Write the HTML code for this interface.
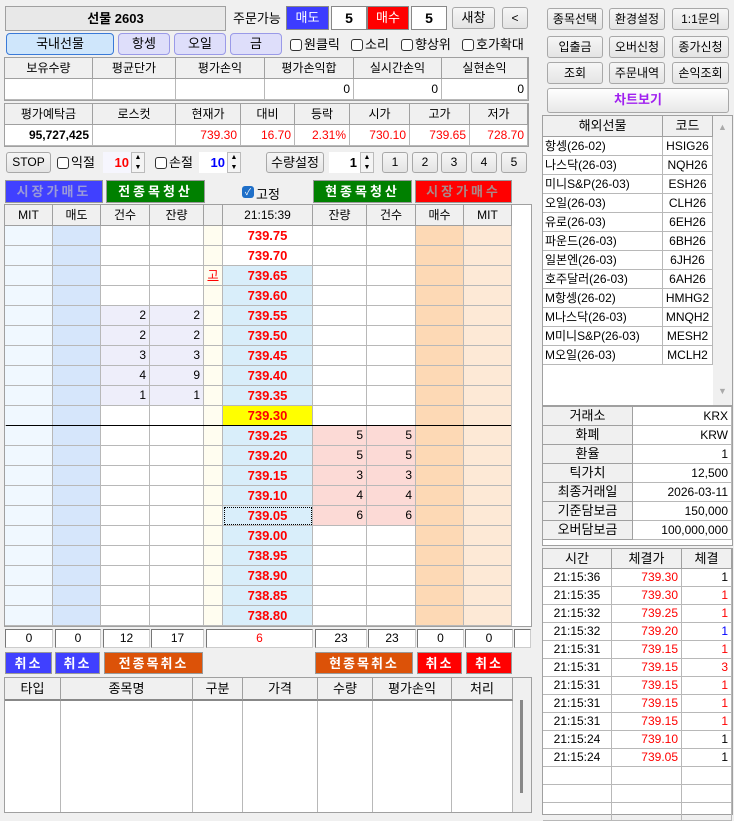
<!DOCTYPE html>
<html><head><meta charset="utf-8">
<style>
*{box-sizing:border-box;margin:0;padding:0}
body{width:734px;height:816px;background:#f0f0f0;font-family:"Liberation Sans","Noto Sans CJK KR","NanumGothic",sans-serif;font-size:12px;color:#000;position:relative;overflow:hidden}
.a{position:absolute}
.btn{position:absolute;border:1px solid #a8a8a8;border-radius:3px;background:linear-gradient(#f6f6f6,#e4e4e4);text-align:center;font-size:12px}
.tab{position:absolute;border:1px solid #9a9ae8;border-radius:4px;background:#dedefa;text-align:center;font-size:13px;line-height:20px}
.cb{position:absolute;font-size:13px;line-height:16px;white-space:nowrap}
.cb i{display:inline-block;width:12px;height:12px;border:1px solid #333;border-radius:3px;background:#fff;vertical-align:-2px;margin-right:2px}
.box{position:absolute;border:1px solid #a0a0a0;background:#fff}
.c{position:absolute;border-right:1px solid #b8b8b8;border-bottom:1px solid #b8b8b8;text-align:center;white-space:nowrap;overflow:hidden}
.h{background:#f0f0f0;border-right:1px solid #a0a0a0;border-bottom:1px solid #a0a0a0}
.r{text-align:right;padding-right:3px}
.cl{font-weight:bold;color:#fff;text-align:center;font-size:13px;line-height:22px;letter-spacing:3px;position:absolute;border:1px solid #999}
.p{color:#f00;font-weight:bold;font-size:13px}
.red{color:#f00}.blue{color:#00f}
</style></head><body>

<!-- top row -->
<div class="a" style="left:5px;top:6px;width:221px;height:25px;border:1px solid #a0a0a0;background:#e8e8e8;text-align:center;font-weight:bold;font-size:13px;line-height:23px">선물 2603</div>
<div class="a" style="left:233px;top:8px;font-size:13px">주문가능</div>
<div class="a" style="left:286px;top:6px;width:43px;height:24px;background:#3c3cff;border:1px solid #888;color:#fff;text-align:center;line-height:22px;font-size:13px">매도</div>
<div class="a" style="left:331px;top:6px;width:36px;height:24px;background:#fff;border:1px solid #888;text-align:center;line-height:22px;font-weight:bold;font-size:14px">5</div>
<div class="a" style="left:367px;top:6px;width:42px;height:24px;background:#f00;border:1px solid #888;color:#fff;text-align:center;line-height:22px;font-size:13px">매수</div>
<div class="a" style="left:411px;top:6px;width:36px;height:24px;background:#fff;border:1px solid #888;text-align:center;line-height:22px;font-weight:bold;font-size:14px">5</div>
<div class="btn" style="left:452px;top:7px;width:43px;height:22px;line-height:20px;font-size:13px">새창</div>
<div class="btn" style="left:502px;top:7px;width:26px;height:22px;line-height:20px">&lt;</div>

<!-- tabs -->
<div class="tab" style="left:6px;top:33px;width:108px;height:22px;background:#cfe6fb;border-color:#3a7ad8">국내선물</div>
<div class="tab" style="left:118px;top:33px;width:52px;height:22px">항셍</div>
<div class="tab" style="left:174px;top:33px;width:52px;height:22px">오일</div>
<div class="tab" style="left:230px;top:33px;width:52px;height:22px">금</div>
<div class="cb" style="left:290px;top:37px"><i></i>원클릭</div>
<div class="cb" style="left:351px;top:37px"><i></i>소리</div>
<div class="cb" style="left:401px;top:37px"><i></i>향상위</div>
<div class="cb" style="left:462px;top:37px"><i></i>호가확대</div>

<!-- table 1 -->
<div class="box" style="left:4px;top:57px;width:525px;height:44px"></div>
<div class="c h" style="left:5px;top:58px;width:88px;height:21px;line-height:20px">보유수량</div>
<div class="c h" style="left:93px;top:58px;width:83px;height:21px;line-height:20px">평균단가</div>
<div class="c h" style="left:176px;top:58px;width:89px;height:21px;line-height:20px">평가손익</div>
<div class="c h" style="left:265px;top:58px;width:89px;height:21px;line-height:20px">평가손익합</div>
<div class="c h" style="left:354px;top:58px;width:88px;height:21px;line-height:20px">실시간손익</div>
<div class="c h" style="left:442px;top:58px;width:86px;height:21px;line-height:20px">실현손익</div>
<div class="c" style="left:5px;top:79px;width:88px;height:21px"></div>
<div class="c" style="left:93px;top:79px;width:83px;height:21px"></div>
<div class="c" style="left:176px;top:79px;width:89px;height:21px"></div>
<div class="c r" style="left:265px;top:79px;width:89px;height:21px;line-height:20px">0</div>
<div class="c r" style="left:354px;top:79px;width:88px;height:21px;line-height:20px">0</div>
<div class="c r" style="left:442px;top:79px;width:86px;height:21px;line-height:20px">0</div>

<!-- table 2 -->
<div class="box" style="left:4px;top:103px;width:525px;height:44px"></div>
<div class="c h" style="left:5px;top:104px;width:88px;height:21px;line-height:20px">평가예탁금</div>
<div class="c h" style="left:93px;top:104px;width:83px;height:21px;line-height:20px">로스컷</div>
<div class="c h" style="left:176px;top:104px;width:65px;height:21px;line-height:20px">현재가</div>
<div class="c h" style="left:241px;top:104px;width:54px;height:21px;line-height:20px">대비</div>
<div class="c h" style="left:295px;top:104px;width:55px;height:21px;line-height:20px">등락</div>
<div class="c h" style="left:350px;top:104px;width:60px;height:21px;line-height:20px">시가</div>
<div class="c h" style="left:410px;top:104px;width:60px;height:21px;line-height:20px">고가</div>
<div class="c h" style="left:470px;top:104px;width:58px;height:21px;line-height:20px">저가</div>
<div class="c r" style="left:5px;top:125px;width:88px;height:21px;line-height:20px;font-weight:bold">95,727,425</div>
<div class="c" style="left:93px;top:125px;width:83px;height:21px"></div>
<div class="c r red" style="left:176px;top:125px;width:65px;height:21px;line-height:20px">739.30</div>
<div class="c r red" style="left:241px;top:125px;width:54px;height:21px;line-height:20px">16.70</div>
<div class="c r red" style="left:295px;top:125px;width:55px;height:21px;line-height:20px">2.31%</div>
<div class="c r red" style="left:350px;top:125px;width:60px;height:21px;line-height:20px">730.10</div>
<div class="c r red" style="left:410px;top:125px;width:60px;height:21px;line-height:20px">739.65</div>
<div class="c r red" style="left:470px;top:125px;width:58px;height:21px;line-height:20px">728.70</div>

<!-- STOP row -->
<div class="btn" style="left:6px;top:152px;width:45px;height:21px;line-height:19px">STOP</div>
<div class="cb" style="left:57px;top:155px"><i></i>익절</div>
<div class="a" style="left:103px;top:152px;width:28px;height:21px;background:#f6f6fe;color:#f00;font-weight:bold;font-size:13px;text-align:right;padding-right:2px;line-height:21px">10</div>
<div class="a" style="left:131px;top:152px;width:14px;height:21px;font-size:7px;line-height:10px;text-align:center;border:1px solid #bbb;background:#f4f4f4">▲<br>▼</div>
<div class="cb" style="left:155px;top:155px"><i></i>손절</div>
<div class="a" style="left:199px;top:152px;width:28px;height:21px;background:#fff;color:#00f;font-weight:bold;font-size:13px;text-align:right;padding-right:2px;line-height:21px">10</div>
<div class="a" style="left:227px;top:152px;width:14px;height:21px;font-size:7px;line-height:10px;text-align:center;border:1px solid #bbb;background:#f4f4f4">▲<br>▼</div>
<div class="btn" style="left:266px;top:152px;width:58px;height:21px;line-height:19px;font-size:13px">수량설정</div>
<div class="a" style="left:329px;top:152px;width:31px;height:21px;background:#fff;font-weight:bold;font-size:13px;text-align:right;padding-right:3px;line-height:21px">1</div>
<div class="a" style="left:360px;top:152px;width:14px;height:21px;font-size:7px;line-height:10px;text-align:center;border:1px solid #bbb;background:#f4f4f4">▲<br>▼</div>
<div class="btn" style="left:382px;top:152px;width:26px;height:21px;line-height:19px">1</div>
<div class="btn" style="left:412px;top:152px;width:26px;height:21px;line-height:19px">2</div>
<div class="btn" style="left:441px;top:152px;width:26px;height:21px;line-height:19px">3</div>
<div class="btn" style="left:471px;top:152px;width:26px;height:21px;line-height:19px">4</div>
<div class="btn" style="left:501px;top:152px;width:26px;height:21px;line-height:19px">5</div>

<!-- action row -->
<div class="cl" style="left:5px;top:180px;width:98px;height:23px;background:#4040ff;color:#9a9ad8">시장가매도</div>
<div class="cl" style="left:106px;top:180px;width:99px;height:23px;background:#008000">전종목청산</div>
<div class="a" style="left:242px;top:186px;width:12px;height:12px;background:#1f6fc8;border-radius:3px;color:#fff;font-size:9px;line-height:12px;text-align:center">✓</div>
<div class="a" style="left:256px;top:184px;font-size:13px">고정</div>
<div class="cl" style="left:313px;top:180px;width:99px;height:23px;background:#008000">현종목청산</div>
<div class="cl" style="left:415px;top:180px;width:97px;height:23px;background:#ff0000;color:#a88">시장가매수</div>

<!-- order book -->
<div class="box" style="left:4px;top:204px;width:528px;height:423px;border-color:#a0a0a0"></div>
<div id="ob"></div>

<!-- totals -->
<div id="tot"></div>

<!-- cancel row -->
<div class="cl" style="left:5px;top:652px;width:47px;height:22px;background:#4040ff;letter-spacing:2px">취소</div>
<div class="cl" style="left:55px;top:652px;width:45px;height:22px;background:#4040ff;letter-spacing:2px">취소</div>
<div class="cl" style="left:104px;top:652px;width:99px;height:22px;background:#dc5208;letter-spacing:2px">전종목취소</div>
<div class="cl" style="left:315px;top:652px;width:98px;height:22px;background:#dc5208;letter-spacing:2px">현종목취소</div>
<div class="cl" style="left:417px;top:652px;width:45px;height:22px;background:#f00;letter-spacing:2px">취소</div>
<div class="cl" style="left:466px;top:652px;width:46px;height:22px;background:#f00;letter-spacing:2px">취소</div>

<!-- bottom table -->
<div class="box" style="left:4px;top:677px;width:528px;height:136px"></div>
<div id="bt"></div>
<div class="a" style="left:513px;top:678px;width:18px;height:134px;background:#f0f0f0"></div>
<div class="a" style="left:520px;top:700px;width:3px;height:93px;background:#888"></div>

<!-- right panel buttons -->
<div class="btn" style="left:547px;top:8px;width:56px;height:22px;line-height:20px">종목선택</div>
<div class="btn" style="left:609px;top:8px;width:56px;height:22px;line-height:20px">환경설정</div>
<div class="btn" style="left:672px;top:8px;width:57px;height:22px;line-height:20px">1:1문의</div>
<div class="btn" style="left:547px;top:36px;width:56px;height:22px;line-height:20px">입출금</div>
<div class="btn" style="left:609px;top:36px;width:56px;height:22px;line-height:20px">오버신청</div>
<div class="btn" style="left:672px;top:36px;width:57px;height:22px;line-height:20px">종가신청</div>
<div class="btn" style="left:547px;top:62px;width:56px;height:22px;line-height:20px">조회</div>
<div class="btn" style="left:609px;top:62px;width:56px;height:22px;line-height:20px">주문내역</div>
<div class="btn" style="left:672px;top:62px;width:57px;height:22px;line-height:20px">손익조회</div>
<div class="btn" style="left:547px;top:88px;width:182px;height:25px;line-height:22px;color:#a020f0;font-weight:bold;font-size:13px;background:linear-gradient(#fff,#e8e8e8)">차트보기</div>

<!-- right list -->
<div class="box" style="left:542px;top:115px;width:191px;height:291px"></div>
<div class="a" style="left:713px;top:116px;width:19px;height:289px;background:#f0f0f0;color:#aaa;font-size:9px;text-align:center"><div style="margin-top:6px">▲</div><div style="margin-top:254px">▼</div></div>
<div id="rl"></div>

<!-- info -->
<div class="box" style="left:542px;top:406px;width:191px;height:140px"></div>
<div id="inf"></div>

<!-- trades -->
<div class="box" style="left:542px;top:548px;width:191px;height:267px"></div>
<div id="tr"></div>

<script>
function d(p,html){document.getElementById(p).insertAdjacentHTML('beforeend',html)}
function cell(p,x,y,w,h,txt,cls,st){d(p,'<div class="c '+(cls||'')+'" style="left:'+x+'px;top:'+y+'px;width:'+w+'px;height:'+h+'px;line-height:'+(h-1)+'px;'+(st||'')+'">'+txt+'</div>')}
// order book
var cols=[5,53,101,150,204,223,313,367,416,464,512];
var hd=['MIT','매도','건수','잔량','','21:15:39','잔량','건수','매수','MIT'];
for(var i=0;i<10;i++)cell('ob',cols[i],205,cols[i+1]-cols[i],21,hd[i],'h');
var prices=['739.75','739.70','739.65','739.60','739.55','739.50','739.45','739.40','739.35','739.30','739.25','739.20','739.15','739.10','739.05','739.00','738.95','738.90','738.85','738.80'];
var sell={4:[2,2],5:[2,2],6:[3,3],7:[4,9],8:[1,1]};
var buy={10:[5,5],11:[5,5],12:[3,3],13:[4,4],14:[6,6]};
for(var r=0;r<20;r++){
 var y=226+r*20;
 cell('ob',5,y,48,20,'','', 'background:#f0f8ff');
 cell('ob',53,y,48,20,'','', 'background:#d6e6fb');
 var s=sell[r];
 cell('ob',101,y,49,20,s?s[0]:'','r',s?'background:#eeeefa':'');
 cell('ob',150,y,54,20,s?s[1]:'','r',s?'background:#eeeefa':'');
 cell('ob',204,y,19,20,r==2?'<span style="color:#f00;text-decoration:underline">고</span>':'','', 'background:#fffdf0');
 var bg=r<2?'#fff':(r==9?'#ffff00':'#d9eefa');
 var extra=r==14?'outline:1px dotted #000;outline-offset:-2px;':'';
 cell('ob',223,y,90,20,prices[r],'p','background:'+bg+';'+extra);
 var b=buy[r];
 cell('ob',313,y,54,20,b?b[0]:'','r',b?'background:#fcdad6':'');
 cell('ob',367,y,49,20,b?b[1]:'','r',b?'background:#fcdad6':'');
 cell('ob',416,y,48,20,'','', 'background:#fdd9b5');
 cell('ob',464,y,48,20,'','', 'background:#fde9d6');
}
d('ob','<div class="a" style="left:6px;top:425px;width:505px;height:1px;background:#000"></div>');
// totals
var tb=[[5,48,'0'],[55,46,'0'],[103,47,'12'],[151,53,'17'],[206,107,'<span style="color:#f00">6</span>'],[315,52,'23'],[368,48,'23'],[417,47,'0'],[465,48,'0'],[514,17,'']];
tb.forEach(function(t){d('tot','<div class="a" style="left:'+t[0]+'px;top:629px;width:'+t[1]+'px;height:19px;background:#fff;border:1px solid #777;border-right-color:#ccc;border-bottom-color:#ccc;text-align:center;line-height:17px">'+t[2]+'</div>')});
// bottom table
var bc=[5,61,193,243,318,373,452,513],bh=['타입','종목명','구분','가격','수량','평가손익','처리'];
for(var i=0;i<7;i++){cell('bt',bc[i],678,bc[i+1]-bc[i],23,bh[i],'h','font-size:13px;border-bottom:2px solid #888');
 d('bt','<div class="a" style="left:'+(bc[i+1]-1)+'px;top:701px;width:1px;height:111px;background:#b8b8b8"></div>');}
// right list
cell('rl',543,116,120,21,'해외선물','h','font-size:13px');
cell('rl',663,116,50,21,'코드','h','font-size:13px');
var items=[['항셍(26-02)','HSIG26'],['나스닥(26-03)','NQH26'],['미니S&amp;P(26-03)','ESH26'],['오일(26-03)','CLH26'],['유로(26-03)','6EH26'],['파운드(26-03)','6BH26'],['일본엔(26-03)','6JH26'],['호주달러(26-03)','6AH26'],['M항셍(26-02)','HMHG2'],['M나스닥(26-03)','MNQH2'],['M미니S&amp;P(26-03)','MESH2'],['M오일(26-03)','MCLH2']];
items.forEach(function(it,i){var y=137+i*19;cell('rl',543,y,120,19,it[0],'','text-align:left;padding-left:2px');cell('rl',663,y,50,19,it[1]);});
// info
var inf=[['거래소','KRX'],['화폐','KRW'],['환율','1'],['틱가치','12,500'],['최종거래일','2026-03-11'],['기준담보금','150,000'],['오버담보금','100,000,000']];
inf.forEach(function(it,i){var y=407+i*19;cell('inf',543,y,90,19,it[0],'h','font-size:13px');cell('inf',633,y,99,19,it[1],'r');});
// trades
cell('tr',543,549,69,20,'시간','h','font-size:13px');cell('tr',612,549,70,20,'체결가','h','font-size:13px');cell('tr',682,549,50,20,'체결','h','font-size:13px');
var tr=[['21:15:36','739.30','1',''],['21:15:35','739.30','1','red'],['21:15:32','739.25','1','red'],['21:15:32','739.20','1','blue'],['21:15:31','739.15','1','red'],['21:15:31','739.15','3','red'],['21:15:31','739.15','1','red'],['21:15:31','739.15','1','red'],['21:15:31','739.15','1','red'],['21:15:24','739.10','1',''],['21:15:24','739.05','1',''],['','','',''],['','','',''],['','','','']];
tr.forEach(function(t,i){var y=569+i*18;cell('tr',543,y,69,18,t[0]);cell('tr',612,y,70,18,t[1],'r red');cell('tr',682,y,50,18,t[2],'r '+t[3]);});
</script>
</body></html>
